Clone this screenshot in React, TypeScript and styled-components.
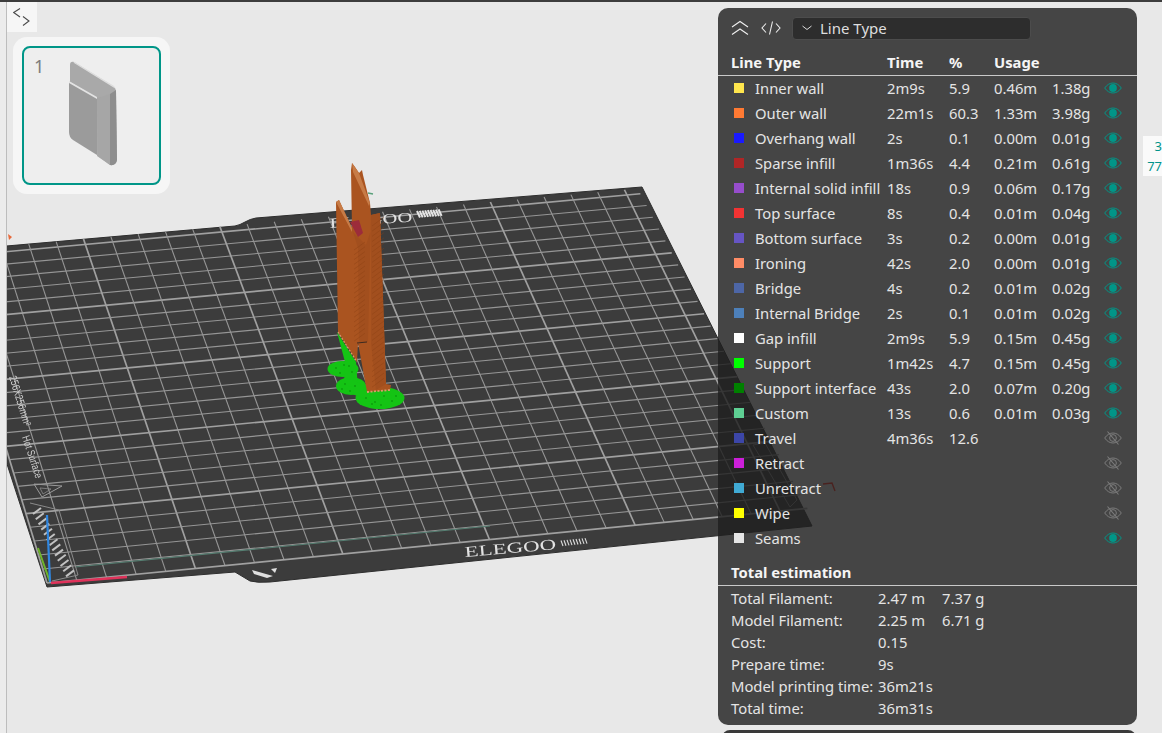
import React from "react";
import styled, { createGlobalStyle } from "styled-components";

const Global = createGlobalStyle`
  html, body { margin: 0; padding: 0; background: #e8e8e8; }
  body { font-family: "Noto Sans", "Liberation Sans", sans-serif; }
`;

const Page = styled.div`
  position: relative;
  width: 1162px;
  height: 733px;
  overflow: hidden;
  background: #e8e8e8;
`;
const TopRule = styled.div`
  position: absolute; left: 0; right: 0; top: 0; height: 2px; background: #3d3d3d;
`;
const LeftRule = styled.div`
  position: absolute; left: 0; top: 2px; bottom: 0; width: 7px;
  background: #ececec; border-right: 1px solid #bdbdbd; box-sizing: border-box;
`;
const Scene = styled.svg`
  position: absolute; left: 0; top: 0; filter: blur(0.45px);
`;
const ToggleButton = styled.div`
  position: absolute; left: 7px; top: 2px; width: 30px; height: 30px;
  background: #f6f6f6; display: flex; align-items: center; justify-content: center;
`;
const ThumbOuter = styled.div`
  position: absolute; left: 13px; top: 37px; width: 157px; height: 157px;
  background: #f6f6f6; border-radius: 14px; padding: 9px; box-sizing: border-box;
`;
const ThumbInner = styled.div`
  position: relative; width: 139px; height: 139px; box-sizing: border-box;
  border: 2.5px solid #009688; border-radius: 8px; background: #eeeeee;
`;
const ThumbNum = styled.span`
  position: absolute; left: 10px; top: 6px; font-size: 18px; line-height: 24px; color: #7d7d7d;
`;
const ThumbArt = styled.svg`
  position: absolute; left: -0.5px; top: -0.5px; filter: blur(0.4px);
`;
const SideTag = styled.div`
  position: absolute; left: 1143px; top: 136px; width: 19px; height: 40px;
  background: #fafafa; color: #00938a; font-size: 13px; line-height: 20px;
  padding-left: 3px; box-sizing: border-box; white-space: nowrap; overflow: hidden;
  display: flex; flex-direction: column; align-items: flex-end;
`;
const Panel = styled.div`
  position: absolute; left: 718px; top: 8px; width: 419px; height: 717px; box-sizing: border-box;
  background: rgba(31, 31, 31, 0.81); border-radius: 10px; color: #e4e4e4;
  font-size: 14.8px; display: flex; flex-direction: column;
`;
const NextPanel = styled.div`
  position: absolute; left: 722px; top: 730px; width: 414px; height: 20px;
  background: #3a3a3a; border-radius: 8px;
`;
const Toolbar = styled.div`
  display: flex; align-items: center; height: 22px; margin-top: 9px; padding-left: 13px;
`;
const ToolIcon = styled.svg`
  display: block; flex: none;
`;
const CodeIcon = styled(ToolIcon)`
  margin-left: 12px;
`;
const Select = styled.div`
  margin-left: 11px; width: 239px; height: 23px; box-sizing: border-box;
  background: #2d2d2d; border: 1px solid #4c4c4c; border-radius: 4px;
  display: flex; align-items: center; padding-left: 9px; gap: 8px;
  font-size: 15px; color: #dedede;
`;
const HeadRow = styled.div`
  display: grid; grid-template-columns: 156px 62px 45px 58px 1fr;
  margin-top: 12px; padding: 0 0 2px 13px; height: 22px;
  align-items: center; border-bottom: 1px solid #c9c9c9; font-weight: 700; color: #f5f5f5;
  font-size: 14.8px; line-height: 20px;
`;
const Rows = styled.div`
  display: flex; flex-direction: column; margin-top: -1px;
`;
const Row = styled.div`
  display: grid; grid-template-columns: 21px 132px 62px 45px 58px 52px 18px;
  height: 25px; padding-left: 16px; align-items: center; white-space: nowrap;
`;
const Swatch = styled.span<{ $c: string }>`
  width: 10px; height: 10px; background: ${p => p.$c}; display: block;
`;
const Cell = styled.span``;
const Section = styled.div`
  margin-top: 10px; height: 26px; box-sizing: border-box; padding-left: 13px; border-bottom: 1px solid #c9c9c9;
  font-weight: 700; color: #f5f5f5; line-height: 24px;
`;
const Summary = styled.div`
  display: flex; flex-direction: column; padding-top: 1px;
`;
const SumRow = styled.div`
  display: grid; grid-template-columns: 147px 64px 1fr; height: 22px; padding-left: 13px;
  align-items: center; white-space: nowrap;
`;

const Eye = ({ on }: { on: boolean }) =>
  on ? (
    <ToolIcon width="18" height="12" viewBox="0 0 18 12">
      <path d="M0.7 6C3 2.6 6 1 9 1s6 1.6 8.3 5C15 9.4 12 11 9 11S3 9.4 0.7 6Z" fill="none" stroke="#009688" strokeWidth="1" />
      <circle cx="9" cy="6" r="3.9" fill="#009688" />
    </ToolIcon>
  ) : (
    <ToolIcon width="18" height="16" viewBox="0 0 18 16">
      <path d="M0.7 8C3 4.6 6 3 9 3s6 1.6 8.3 5C15 11.4 12 13 9 13S3 11.4 0.7 8Z" fill="none" stroke="#7c7c7c" strokeWidth="1" />
      <circle cx="9" cy="8" r="3.4" fill="none" stroke="#7c7c7c" strokeWidth="1" />
      <path d="M3.5 1.5 14.5 14.5" stroke="#7c7c7c" strokeWidth="1.1" />
    </ToolIcon>
  );

type L = [string, string, string?, string?, string?, string?, boolean?];
const lines: L[] = [
  ["#ffe64d", "Inner wall", "2m9s", "5.9", "0.46m", "1.38g", true],
  ["#ff7a33", "Outer wall", "22m1s", "60.3", "1.33m", "3.98g", true],
  ["#1a1aff", "Overhang wall", "2s", "0.1", "0.00m", "0.01g", true],
  ["#b02626", "Sparse infill", "1m36s", "4.4", "0.21m", "0.61g", true],
  ["#964dcc", "Internal solid infill", "18s", "0.9", "0.06m", "0.17g", true],
  ["#f23333", "Top surface", "8s", "0.4", "0.01m", "0.04g", true],
  ["#6655c4", "Bottom surface", "3s", "0.2", "0.00m", "0.01g", true],
  ["#ff8c66", "Ironing", "42s", "2.0", "0.00m", "0.01g", true],
  ["#4d66a6", "Bridge", "4s", "0.2", "0.01m", "0.02g", true],
  ["#4d80ba", "Internal Bridge", "2s", "0.1", "0.01m", "0.02g", true],
  ["#ffffff", "Gap infill", "2m9s", "5.9", "0.15m", "0.45g", true],
  ["#00ff00", "Support", "1m42s", "4.7", "0.15m", "0.45g", true],
  ["#008000", "Support interface", "43s", "2.0", "0.07m", "0.20g", true],
  ["#5ecf93", "Custom", "13s", "0.6", "0.01m", "0.03g", true],
  ["#3c46a8", "Travel", "4m36s", "12.6", "", "", false],
  ["#cc1fd9", "Retract", "", "", "", "", false],
  ["#40aad4", "Unretract", "", "", "", "", false],
  ["#ffff00", "Wipe", "", "", "", "", false],
  ["#e6e6e6", "Seams", "", "", "", "", true],
];
const summary = [
  ["Total Filament:", "2.47 m", "7.37 g"],
  ["Model Filament:", "2.25 m", "6.71 g"],
  ["Cost:", "0.15", ""],
  ["Prepare time:", "9s", ""],
  ["Model printing time:", "36m21s", ""],
  ["Total time:", "36m31s", ""],
];

type P = [number, number];
const homography = (a: P, b: P, c: P, d: P) => {
  const [x0, y0] = a, [x1, y1] = b, [x2, y2] = c, [x3, y3] = d;
  const dx1 = x1 - x2, dx2 = x3 - x2, sx = x0 - x1 + x2 - x3;
  const dy1 = y1 - y2, dy2 = y3 - y2, sy = y0 - y1 + y2 - y3;
  const det = dx1 * dy2 - dx2 * dy1;
  const g = (sx * dy2 - dx2 * sy) / det;
  const h = (dx1 * sy - sx * dy1) / det;
  const A = x1 - x0 + g * x1, B = x3 - x0 + h * x3, D = y1 - y0 + g * y1, E = y3 - y0 + h * y3;
  return (u: number, v: number): P => {
    const w = g * u + h * v + 1;
    return [(A * u + B * v + x0) / w, (D * u + E * v + y0) / w];
  };
};
const project = homography([-52, 257], [627, 195], [780, 511], [47, 583]);
const N = 25;
const gridLines: { p: P; q: P; major: boolean }[] = [];
for (let i = 0; i <= N; i++) {
  const t = i / N;
  gridLines.push({ p: project(t, -0.018), q: project(t, 1), major: i % 5 === 0 });
  gridLines.push({ p: project(0, t), q: project(1.02 + 0.018 * t, t), major: i % 5 === 0 });
}

const hatch: P[][] = [];
for (let i = 0; i < 13; i++) {
  const x = 33 + i * 2.75, y = 514 + i * 5.2;
  hatch.push([[x, y], [x + 8, y - 6]]);
}
const specks: P[] = [
  [336, 368], [344, 365], [352, 372], [340, 373], [349, 366], [345, 384], [355, 386], [350, 391],
  [342, 389], [366, 398], [375, 402], [384, 396], [392, 401], [372, 404], [381, 405], [396, 396],
];

export default function App() {
  return (
    <Page>
      <Global />
      <Scene width="1162" height="733" viewBox="0 0 1162 733">
        <path
          d="M-62 252 L235 226 Q240 225 245 222 Q250 219 256 218 L642 187 L812 526 L270 582 Q258 583 250 581 L235 572 L47 587 Z"
          fill="#3c3c3c" stroke="#2e2e2e" strokeWidth="1"
        />
        {gridLines.map((l, i) => (
          <line
            key={i}
            x1={l.p[0]} y1={l.p[1]} x2={l.q[0]} y2={l.q[1]}
            stroke={l.major ? "#a0a0a0" : "#969696"}
            strokeWidth={l.major ? 1.7 : 1.1}
          />
        ))}
        <path d="M753 445 L765 443 L797 500 L790 507 Z" fill="none" stroke="#8c8c8c" strokeWidth="1" />
        <line x1="75" y1="567" x2="490" y2="526" stroke="#567f72" strokeWidth="1.2" />
        <g fill="#e2e2e2" fontFamily="'Liberation Serif', serif">
          <text x="465" y="557" fontSize="15" textLength="92" lengthAdjust="spacingAndGlyphs" transform="rotate(-5 465 557)">ELEGOO</text>
          <text x="330" y="228" fontSize="14" textLength="83" lengthAdjust="spacingAndGlyphs" transform="rotate(-4.5 330 228)">ELEGOO</text>
        </g>
        <g stroke="#dcdcdc" strokeWidth="1.1">
          {Array.from({ length: 9 }).map((_, i) => (
            <line key={i} x1={563 + i * 3} y1={546 - i * 0.3} x2={561 + i * 3} y2={540.5 - i * 0.3} />
          ))}
        </g>
        <g stroke="#e4e4e4" strokeWidth="2">
          {Array.from({ length: 9 }).map((_, i) => (
            <line key={i} x1={420 + i * 2.7} y1={217.5 - i * 0.2} x2={417 + i * 2.7} y2={211 - i * 0.2} />
          ))}
        </g>
        <path d="M252 570 L273 576 L267 578 L254 574 Z M271 569 L277 568 L275 573 Z" fill="#e0e0e0" />
        <text x="9" y="377" fontSize="11" fill="#d0d0d0" fontFamily="'Liberation Sans', sans-serif" transform="rotate(73 9 377)" textLength="52" lengthAdjust="spacingAndGlyphs">
          256X256mm²
        </text>
        <text x="22" y="437" fontSize="11" fill="#d0d0d0" fontFamily="'Liberation Sans', sans-serif" transform="rotate(72 22 437)" textLength="44" lengthAdjust="spacingAndGlyphs">
          Hot Surface
        </text>
        <path d="M34 484 L62 486 L42 497 Z" fill="none" stroke="#9a9a9a" strokeWidth="1" />
        <path d="M40 488 L51 489 L43 494 Z" fill="none" stroke="#8a8a8a" strokeWidth="0.8" />
        <path d="M30 503 L59 510 L78 575 L52 581" fill="none" stroke="#8a8a8a" strokeWidth="1" />
        {hatch.map((h, i) => (
          <line key={i} x1={h[0][0]} y1={h[0][1]} x2={h[1][0]} y2={h[1][1]} stroke="#c2c2c2" strokeWidth="2" />
        ))}
        <line x1="50" y1="582" x2="38" y2="548" stroke="#6fb52a" strokeWidth="2" />
        <line x1="50" y1="582" x2="47" y2="515" stroke="#2f86e0" strokeWidth="2.2" />
        <line x1="51" y1="583" x2="127" y2="577" stroke="#e0325a" strokeWidth="2.4" />

        <g fill="#14c414">
          <ellipse cx="343" cy="369" rx="15.5" ry="8" />
          <ellipse cx="351" cy="386" rx="15" ry="9" />
          <ellipse cx="380" cy="398" rx="24.5" ry="11" />
          <path d="M337 332 L356 362 L358 388 L344 385 L345 362 Z" />
          <path d="M362 390 L388 388 L392 398 L365 402 Z" />
          <path d="M352 380 L372 388 L368 400 L352 394 Z" />
        </g>
        <g fill="#0c9c0c">
          {specks.map((s, i) => (
            <circle key={i} cx={s[0]} cy={s[1]} r="0.9" />
          ))}
        </g>
        <path d="M351 170 L352 163 L355 167 L359 173 L362 170 L363 175 L370 203 L371 215 L380 213 L386 384 L391 385 L390 390 L367 392 L358 343 L357 362 L338 332 L336 202 L339 200 L352 228 Z" fill="#aa5420" />
        <path d="M353 232 L358 248 L359 342 L368 342 L371 215 L380 213 L386 384 L376 390 L371 343 L371 230 L366 245 Z" fill="#a24f1e" />
        <g stroke="#8a4115" strokeWidth="0.55" opacity="0.75">
          {Array.from({ length: 32 }).map((_, i) => (
            <line key={i} x1="372" x2="384" y1={226 + i * 5.2} y2={217 + i * 5.2} />
          ))}
          {Array.from({ length: 20 }).map((_, i) => (
            <line key={i} x1="354" x2="365" y1={250 + i * 4.8} y2={242 + i * 4.8} />
          ))}
        </g>
        <path d="M336 202 L339 200 L352 228 L352 232 Z M352 163 L359 173 L370 203 L369 206 L353 172 Z" fill="#c77b46" />
        <path d="M338 332 L357 362" stroke="#d99a6c" strokeWidth="1.2" strokeDasharray="2 1.5" />
        <path d="M367 392 L390 390" stroke="#d99a6c" strokeWidth="1.8" strokeDasharray="2 1.5" />
        <path d="M350 222 L359 220 L363 233 L358 237 Z" fill="#9c2c3a" />
        <path d="M357 343 L367 342" stroke="#3b2a20" strokeWidth="1" />
        <path d="M368 193 L373 194" stroke="#59a07a" strokeWidth="1.5" />
        <path d="M8 234 L12 237 L9 240 Z" fill="#e8693a" />
        <path d="M823 484 L832 483 L835 491" stroke="#ff3020" strokeWidth="1.4" fill="none" />
      </Scene>

      <TopRule />
      <LeftRule />
      <ToggleButton>
        <ToolIcon width="18" height="18" viewBox="0 0 18 18">
          <path d="M7 0.5 L0.7 4.5 L7 9" fill="none" stroke="#4a4a4a" strokeWidth="1.1" />
          <path d="M10 8.5 L16 13 L10 17.5" fill="none" stroke="#4a4a4a" strokeWidth="1.1" />
        </ToolIcon>
      </ToggleButton>
      <ThumbOuter>
        <ThumbInner>
          <ThumbNum>1</ThumbNum>
          <ThumbArt width="135" height="135" viewBox="0 0 135 135">
            <path d="M46 17 Q46 13 50 14 L89 38 Q92 40 92 44 L93 112 Q92 118 86 117 L73 108 L73 50 L46 34 Z" fill="#a9a9a9" />
            <path d="M45 34 L73 50 L73 107 L49 92 Q45 89 45 84 Z" fill="#9b9b9b" />
            <path d="M73 50 L74 108 L86 117 L86 46 Z" fill="#a6a6a6" />
            <path d="M86 46 L92 42 L93 112 Q92 118 86 117 Z" fill="#8e8e8e" />
            <path d="M45 33 L73 49 L73 51 L45 35 Z" fill="#e3e3e3" />
            <path d="M49 13 L90 38 L92 41 L50 15 Z" fill="#dedede" />
          </ThumbArt>
        </ThumbInner>
      </ThumbOuter>
      <SideTag>
        <span>3</span>
        <span>77</span>
      </SideTag>

      <Panel>
        <Toolbar>
          <ToolIcon width="18" height="16" viewBox="0 0 18 16">
            <path d="M1 7 L9 1.5 L17 7 M1 14.5 L9 9 L17 14.5" fill="none" stroke="#efefef" strokeWidth="1.1" />
          </ToolIcon>
          <CodeIcon width="20" height="16" viewBox="0 0 20 16">
            <path d="M5 3.5 L1 8 L5 12.5 M15 3.5 L19 8 L15 12.5 M11.5 1.5 L8.5 14.5" fill="none" stroke="#eeeeee" strokeWidth="1.1" />
          </CodeIcon>
          <Select>
            <ToolIcon width="10" height="6" viewBox="0 0 10 6">
              <path d="M0.5 1 L5 4.5 L9.5 1" fill="none" stroke="#dcdcdc" strokeWidth="1" />
            </ToolIcon>
            Line Type
          </Select>
        </Toolbar>
        <HeadRow>
          <span>Line Type</span>
          <span>Time</span>
          <span>%</span>
          <span>Usage</span>
        </HeadRow>
        <Rows>
          {lines.map(l => (
            <Row key={l[1]}>
              <Swatch $c={l[0]} />
              <Cell>{l[1]}</Cell>
              <Cell>{l[2]}</Cell>
              <Cell>{l[3]}</Cell>
              <Cell>{l[4]}</Cell>
              <Cell>{l[5]}</Cell>
              <Eye on={!!l[6]} />
            </Row>
          ))}
        </Rows>
        <Section>Total estimation</Section>
        <Summary>
          {summary.map(s => (
            <SumRow key={s[0]}>
              <span>{s[0]}</span>
              <span>{s[1]}</span>
              <span>{s[2]}</span>
            </SumRow>
          ))}
        </Summary>
      </Panel>
      <NextPanel />
    </Page>
  );
}
